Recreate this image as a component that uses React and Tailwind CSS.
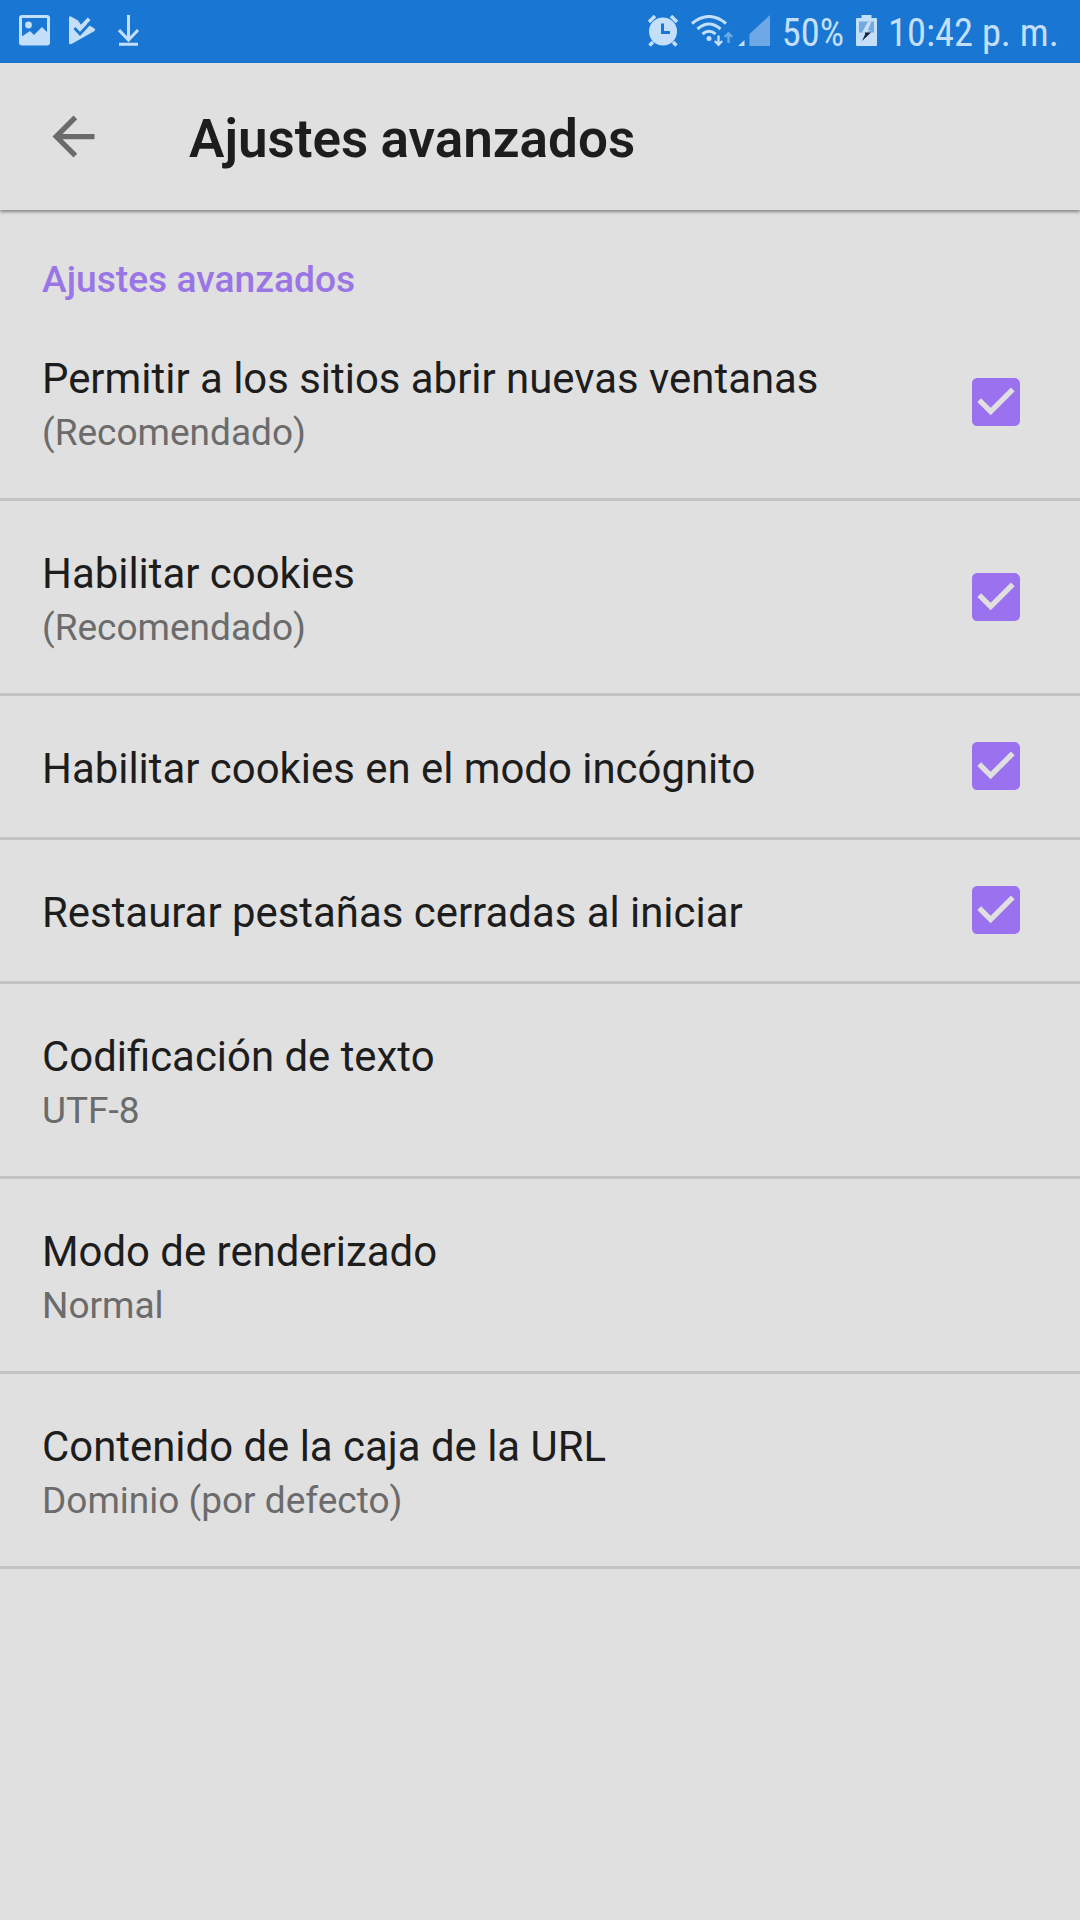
const items = [
  { title: "Permitir a los sitios abrir nuevas ventanas", summary: "(Recomendado)", checked: true },
  { title: "Habilitar cookies", summary: "(Recomendado)", checked: true },
  { title: "Habilitar cookies en el modo incógnito", checked: true },
  { title: "Restaurar pestañas cerradas al iniciar", checked: true },
  { title: "Codificación de texto", summary: "UTF-8" },
  { title: "Modo de renderizado", summary: "Normal" },
  { title: "Contenido de la caja de la URL", summary: "Dominio (por defecto)" },
];

const StatusBar = () => (
  <div className="h-[63px] bg-[#1976d2] text-[#c3dffa] pl-[19px] pr-[21px] flex items-start justify-between">
    {/* Notifications */}
    <div className="flex pt-[15px]">
      <svg className="w-[31px] h-[31px]" viewBox="0 0 31 31">
        <rect x="1.5" y="1.5" width="28" height="27.5" rx="1.5" fill="none" stroke="currentColor" strokeWidth="3" />
        <circle cx="9.5" cy="10" r="3.4" fill="currentColor" />
        <path d="M2 22l9-6 4 4 8-8 6 6v11H2z" fill="currentColor" />
      </svg>
      <svg className="w-[27px] h-[31px] ml-[19px]" viewBox="0 0 27 31">
        <path
          d="M2 1.5l7 4 3 4.200 6.700-7.300 2.800 2.500-3.500 4.100 7.500 4.500q1.500 1.200 0 2.400L2.500 29Q0 30 0 27.500V3Q0 .8 2 1.500z"
          fill="currentColor"
        />
        <path d="M5.500 13l5.500 6L20.500 8.500" fill="none" stroke="#1976d2" strokeWidth="2.800" />
      </svg>
      <svg className="w-[22px] h-[31px] ml-[22px]" viewBox="0 0 22 31">
        <path d="M10.500 0v25M1 15l9.500 10L20 15M1 29.300h19" fill="none" stroke="currentColor" strokeWidth="3" />
      </svg>
    </div>

    {/* System icons */}
    <div className="flex">
      <svg className="w-[32px] h-[32px] mt-[15px]" viewBox="0 0 32 32">
        <path d="M2 7l6-6M30 7l-6-6M6 27l-3.500 3.500M26 27l3.500 3.500" stroke="currentColor" strokeWidth="3.500" />
        <circle cx="16" cy="16.500" r="14" fill="currentColor" />
        <path d="M15.500 8.500v9H23" fill="none" stroke="#1976d2" strokeWidth="3" />
      </svg>
      <svg className="w-[43px] h-[32px] mt-[15px] ml-[12px]" viewBox="0 0 43 32">
        <g fill="none" stroke="currentColor" strokeWidth="3">
          <path d="M1 8.500Q18 -5.500 35 8.500" />
          <path d="M6.500 14Q18 4 29.500 14" />
          <path d="M11.500 19Q18 13.500 24.500 19" />
        </g>
        <circle cx="18" cy="23.500" r="2.500" fill="currentColor" />
        <path d="M27.500 20.500v9M23.800 26l3.700 3.800 3.700-3.800" fill="none" stroke="currentColor" strokeWidth="2.400" />
        <path d="M37.500 28v-9M33.800 22l3.700-3.800 3.700 3.800" fill="none" stroke="#6ea9e5" strokeWidth="2.400" />
      </svg>
      <svg className="w-[32px] h-[31px] mt-[15px] ml-[4px]" viewBox="0 0 32 31">
        <path d="M6.500 25v6H0z" fill="currentColor" />
        <path d="M32 0v31H11.500V19z" fill="#6ea9e5" />
      </svg>
      <span className="ml-[12px] mt-[10px] font-['Roboto_Condensed',Roboto,sans-serif] text-[38.5px] leading-[46px]">50%</span>
      <svg className="w-[22px] h-[32px] mt-[15px] ml-[12px]" viewBox="0 0 22 32">
        <path d="M5.500 0h10v3H20q1 0 1 1v26q0 1-1 1H1q-1 0-1-1V4q0-1 1-1h4.500z" fill="currentColor" />
        <path d="M3 6.500h15v11H3z" fill="#75a9dd" />
        <path d="M12 6.500L6 17.500h4l5-2.500h-3l3.500-8.500z" fill="currentColor" />
        <path d="M9 17.500h6L6 26l3-6.500z" fill="#14233c" />
      </svg>
      <span className="ml-[10px] mt-[10px] font-['Roboto_Condensed',Roboto,sans-serif] text-[38.5px] leading-[46px]">10:42 p. m.</span>
    </div>
  </div>
);

const Checkbox = () => (
  <svg className="w-16 h-16 mr-[10px]" viewBox="0 0 24 24">
    <path
      fill="#9a72ef"
      d="M19 3H5c-1.110 0-2 .9-2 2v14c0 1.100.890 2 2 2h14c1.110 0 2-.9 2-2V5c0-1.100-.890-2-2-2zm-9 14l-5-5 1.410-1.410L10 14.170l7.590-7.590L19 8l-9 9z"
    />
  </svg>
);

const App = () => {
  return (
    <div className="w-[1080px] h-[1920px] bg-[#e0e0e0] font-[Roboto,sans-serif] overflow-hidden">
      <StatusBar />
      <header className="h-[147px] flex items-center shadow-[0_2px_3px_rgba(0,0,0,0.4)]">
        <svg className="w-[63px] h-[63px] ml-[42px]" viewBox="0 0 24 24">
          <path fill="#6b6b6b" d="M20 11H7.830l5.590-5.590L12 4l-8 8 8 8 1.410-1.410L7.830 13H20v-2z" />
        </svg>
        <h1 className="ml-[84px] pt-[7px] text-[53px] font-semibold text-[#1d1d1d] [word-spacing:-1px]">Ajustes avanzados</h1>
      </header>
      <h2 className="h-24 pt-[42px] px-[42px] text-[37.2px] font-medium text-[#9a75e6]">Ajustes avanzados</h2>
      <ul>
        {items.map((item) => (
          <li
            key={item.title}
            className={`flex items-center justify-between px-[42px] border-b-3 border-[#c3c3c3] ${item.summary ? "h-[195px]" : "h-[144px] pb-px"}`}
          >
            <div className="pt-[5px]">
              <p className="text-[41.9px] leading-[56px] text-[#1d1d1d]">{item.title}</p>
              {item.summary && <p className="text-[37px] leading-[52px] text-[#6b6b6b]">{item.summary}</p>}
            </div>
            {item.checked && <Checkbox />}
          </li>
        ))}
      </ul>
    </div>
  );
};

export default App;
